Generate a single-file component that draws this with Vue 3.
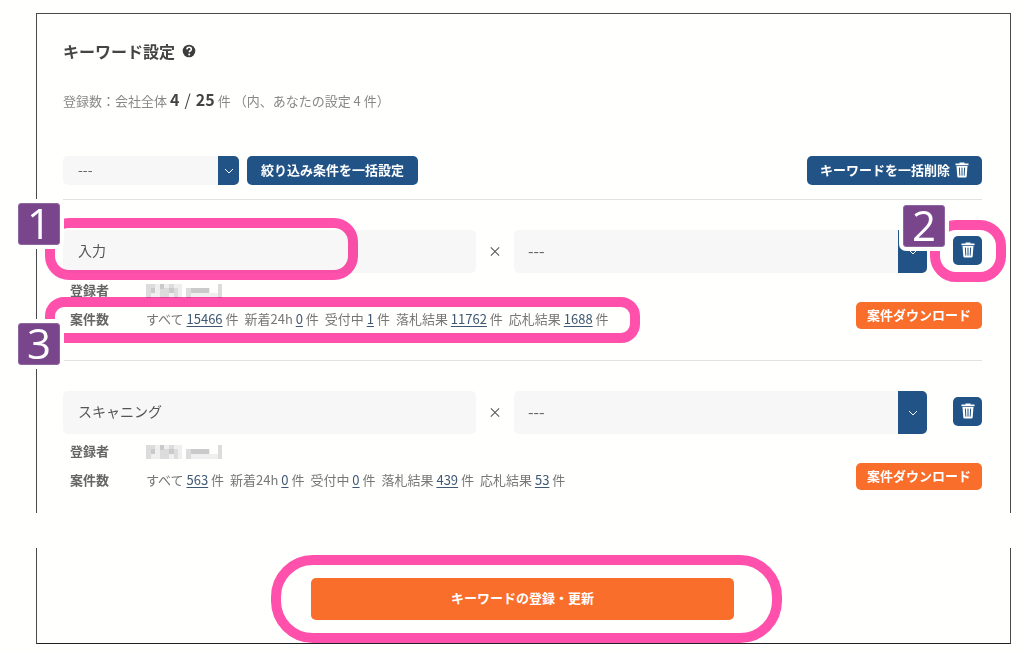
<script setup>
import { ref } from 'vue'

const bulkFilter = ref('')
const rows = ref([
  {
    id: 1,
    keyword: '入力',
    filter: '',
    marked: true,
    counts: [
      { label: 'すべて', value: 15466 },
      { label: '新着24h', value: 0 },
      { label: '受付中', value: 1 },
      { label: '落札結果', value: 11762 },
      { label: '応札結果', value: 1688 },
    ],
  },
  {
    id: 2,
    keyword: 'スキャニング',
    filter: '',
    marked: false,
    counts: [
      { label: 'すべて', value: 563 },
      { label: '新着24h', value: 0 },
      { label: '受付中', value: 0 },
      { label: '落札結果', value: 439 },
      { label: '応札結果', value: 53 },
    ],
  },
])
</script>

<template>
  <main class="page">
    <section class="panel panel-top">
      <h1 class="title">
        キーワード設定
        <svg class="help" viewBox="0 0 14 14" role="img" aria-label="ヘルプ">
          <circle cx="7" cy="7" r="6.3" fill="#3c3c3c" />
          <path d="M4.9 5.4C5 4 5.9 3.3 7.1 3.3c1.3 0 2.2.8 2.2 1.9 0 1.6-2 1.5-2 3.1" fill="none" stroke="#fff" stroke-width="1.6" />
          <circle cx="7.2" cy="10.4" r="1" fill="#fff" />
        </svg>
      </h1>

      <p class="summary">
        <span>登録数：会社全体</span>
        <strong>4</strong>
        <span class="slash">/</span>
        <strong>25</strong>
        <span>件</span>
        <span>（内、あなたの設定 4 件）</span>
      </p>

      <div class="toolbar">
        <div class="select select-small">
          <select v-model="bulkFilter" aria-label="絞り込み条件">
            <option value="">---</option>
          </select>
          <span class="arrow">
            <svg viewBox="0 0 10 6"><path d="M1 1l4 4 4-4" /></svg>
          </span>
        </div>
        <button type="button" class="btn btn-blue">絞り込み条件を一括設定</button>
        <button type="button" class="btn btn-blue btn-clear">
          キーワードを一括削除
          <svg class="trash" viewBox="0 0 14 16">
            <path d="M4.5 1.6V.5h5v1.1h4v1.6H.5V1.6z" />
            <path d="M1.5 4h11l-.8 10.2c-.1.8-.6 1.3-1.4 1.3H3.7c-.8 0-1.3-.5-1.4-1.3z" />
            <path class="slit" d="M4.4 5.6l.4 8M7 5.6v8M9.6 5.6l-.4 8" />
          </svg>
        </button>
      </div>

      <article v-for="row in rows" :key="row.id" class="row">
        <div class="fields">
          <div class="keyword">
            <input v-model="row.keyword" type="text" aria-label="キーワード" />
            <template v-if="row.marked">
              <span class="ring ring-keyword"></span>
              <span class="step step-one">1</span>
            </template>
          </div>
          <span class="times">×</span>
          <div class="select select-large">
            <select v-model="row.filter" aria-label="絞り込み条件">
              <option value="">---</option>
            </select>
            <span class="arrow">
              <svg viewBox="0 0 10 6"><path d="M1 1l4 4 4-4" /></svg>
            </span>
          </div>
          <div class="remove">
            <button type="button" class="btn btn-blue btn-icon" aria-label="削除">
              <svg class="trash" viewBox="0 0 14 16">
                <path d="M4.5 1.6V.5h5v1.1h4v1.6H.5V1.6z" />
                <path d="M1.5 4h11l-.8 10.2c-.1.8-.6 1.3-1.4 1.3H3.7c-.8 0-1.3-.5-1.4-1.3z" />
                <path class="slit" d="M4.4 5.6l.4 8M7 5.6v8M9.6 5.6l-.4 8" />
              </svg>
            </button>
            <template v-if="row.marked">
              <span class="ring ring-remove"></span>
              <span class="step step-two">2</span>
            </template>
          </div>
        </div>

        <div class="details">
          <dl class="meta">
            <div class="meta-line">
              <dt>登録者</dt>
              <dd>
                <svg class="mosaic" viewBox="0 0 76 14">
                  <g fill="#efefef">
                    <rect x="0" y="0" width="36" height="14" />
                    <rect x="40" y="4" width="24" height="10" />
                    <rect x="64" y="9" width="12" height="5" />
                  </g>
                  <g fill="#dcdcdc">
                    <rect x="0" y="0" width="9" height="9" />
                    <rect x="0" y="9" width="5" height="5" />
                    <rect x="14" y="4" width="9" height="10" />
                    <rect x="23" y="0" width="5" height="9" />
                    <rect x="28" y="4" width="4" height="10" />
                    <rect x="40" y="4" width="5" height="10" />
                    <rect x="72" y="0" width="4" height="14" />
                  </g>
                  <g fill="#cacaca">
                    <rect x="5" y="4" width="4" height="5" />
                    <rect x="14" y="0" width="4" height="5" />
                    <rect x="23" y="4" width="5" height="5" />
                    <rect x="45" y="4" width="18" height="5" />
                  </g>
                </svg>
              </dd>
            </div>
            <div class="meta-line">
              <dt>案件数</dt>
              <dd class="counts">
                <span v-for="c in row.counts" :key="c.label" class="count">
                  {{ c.label }} <a href="#">{{ c.value }}</a> 件
                </span>
              </dd>
            </div>
          </dl>
          <button type="button" class="btn btn-orange">案件ダウンロード</button>
          <template v-if="row.marked">
            <span class="ring ring-counts"></span>
            <span class="step step-three">3</span>
          </template>
        </div>
      </article>
    </section>

    <section class="panel panel-bottom">
      <div class="submit">
        <button type="button" class="btn btn-orange btn-submit">キーワードの登録・更新</button>
        <span class="ring ring-submit"></span>
      </div>
    </section>
  </main>
</template>

<style>
body {
  background: #fffffd;
}
</style>

<style scoped>
.page {
  box-sizing: border-box;
  min-height: 100vh;
  padding: 13px 13px 8px 36px;
  display: flex;
  flex-direction: column;
  gap: 35px;
  font-family: "Noto Sans CJK JP", sans-serif;
  font-size: 13px;
  line-height: 20px;
  color: #777;
}
.page * {
  box-sizing: border-box;
}
.panel {
  border: 1px solid #4a4a4a;
  padding: 0 28px 0 26px;
}
.panel-top {
  border-bottom: 0;
  padding-top: 25px;
}
.panel-bottom {
  border-top: 0;
  border-bottom-color: #222;
  padding-top: 30px;
  padding-bottom: 23px;
}
.title {
  margin: 0;
  display: flex;
  align-items: center;
  gap: 7px;
  font-size: 16px;
  line-height: 24px;
  font-weight: 700;
  color: #444;
}
.help {
  width: 14px;
  height: 14px;
}
.summary {
  margin: 23px 0 0;
  display: flex;
  align-items: baseline;
  gap: 3px;
  line-height: 26px;
  color: #888;
}
.summary strong,
.slash {
  font-size: 16px;
  color: #444;
}
.slash {
  padding: 0 2px;
}
.toolbar {
  margin-top: 42px;
  display: flex;
  gap: 8px;
}
.btn {
  border: 0;
  border-radius: 5px;
  padding: 0 14px 2px;
  font: inherit;
  font-weight: 700;
  color: #fff;
  display: inline-flex;
  align-items: center;
  justify-content: center;
}
.btn-blue {
  background: #215387;
  height: 29px;
}
.btn-clear {
  margin-left: auto;
  padding: 0 13px 2px;
  gap: 5px;
}
.btn-orange {
  background: #f96e2a;
  height: 27px;
  padding: 0 11px 2px;
}
.btn-icon {
  width: 29px;
  padding: 0 0 2px;
}
.trash {
  width: 14px;
  height: 16px;
  fill: #fff;
}
.slit {
  fill: none;
  stroke: #215387;
  stroke-width: 1;
}
.select {
  display: flex;
  border-radius: 5px;
  overflow: hidden;
  background: #f7f7f7;
}
.select select {
  appearance: none;
  flex: 1;
  min-width: 0;
  border: 0;
  background: transparent;
  padding: 0 15px 4px;
  font: inherit;
  font-size: 14px;
  color: #666;
}
.arrow {
  background: #215387;
  display: flex;
  align-items: center;
  justify-content: center;
}
.arrow svg {
  width: 10px;
  height: 6px;
  fill: none;
  stroke: #fff;
  stroke-width: 1;
}
.select-small {
  width: 176px;
  height: 29px;
}
.select-small .arrow {
  width: 21px;
}
.select-large {
  height: 43px;
}
.select-large select {
  padding-left: 14px;
  font-size: 16px;
}
.select-large .arrow {
  width: 29px;
}
.row {
  border-top: 1px solid #e2e2e2;
  padding: 30px 0 31px;
}
.row:last-child {
  padding-bottom: 23px;
}
.toolbar + .row {
  margin-top: 14px;
}
.fields {
  display: grid;
  grid-template-columns: 1fr 38px 1fr 55px;
  align-items: center;
}
.keyword {
  position: relative;
}
.keyword input {
  display: block;
  width: 100%;
  height: 43px;
  border: 0;
  border-radius: 5px;
  background: #f7f7f7;
  padding: 0 15px 4px;
  font: inherit;
  font-size: 14px;
  color: #555;
}
.times {
  padding-bottom: 4px;
  text-align: center;
  font-size: 14px;
  color: #555;
}
.remove {
  position: relative;
  justify-self: end;
  width: 29px;
  height: 29px;
  margin-bottom: 2px;
}
.details {
  position: relative;
  display: flex;
  justify-content: space-between;
  align-items: flex-end;
  padding: 7px 0 0 7px;
}
.meta {
  margin: 0;
  display: flex;
  flex-direction: column;
  gap: 9px;
}
.meta-line {
  display: flex;
}
dt {
  width: 76px;
  font-weight: 700;
  color: #666;
}
dd {
  margin: 0;
}
.mosaic {
  display: block;
  width: 76px;
  height: 14px;
  margin-top: 4px;
}
.counts {
  display: flex;
  gap: 6px;
  color: #777;
  white-space: nowrap;
}
.count a {
  color: #3f5873;
  text-decoration: underline;
  text-underline-offset: 2px;
}
.submit {
  position: relative;
  width: 46%;
  margin: 0 auto;
}
.btn-submit {
  width: 100%;
  height: 42px;
}
.ring {
  position: absolute;
  border: 10px solid #ff50ae;
  mix-blend-mode: multiply;
  pointer-events: none;
}
.ring-keyword {
  left: -18px;
  top: -12px;
  width: 313px;
  height: 62px;
  border-radius: 24px;
}
.ring-remove {
  inset: -16px -24px -17px -23px;
  border-radius: 26px;
}
.ring-counts {
  left: -18px;
  top: 24px;
  width: 595px;
  height: 46px;
  border-radius: 19px;
}
.ring-submit {
  inset: -23px -48px -23px -40px;
  border-radius: 42px;
}
.step {
  position: absolute;
  z-index: 2;
  width: 42px;
  height: 42px;
  border: 1px solid #8f66a0;
  border-radius: 3px;
  background: #79468c;
  box-shadow: 0 0 0 4px #fffffd;
  font-family: "Open Sans", "Noto Sans", sans-serif;
  font-size: 42px;
  font-weight: 500;
  line-height: 38px;
  text-align: center;
  color: #fff;
}
.step-one {
  left: -45px;
  top: -27px;
}
.step-two {
  left: -50px;
  top: -31px;
}
.step-three {
  left: -45px;
  top: 50px;
}
</style>
